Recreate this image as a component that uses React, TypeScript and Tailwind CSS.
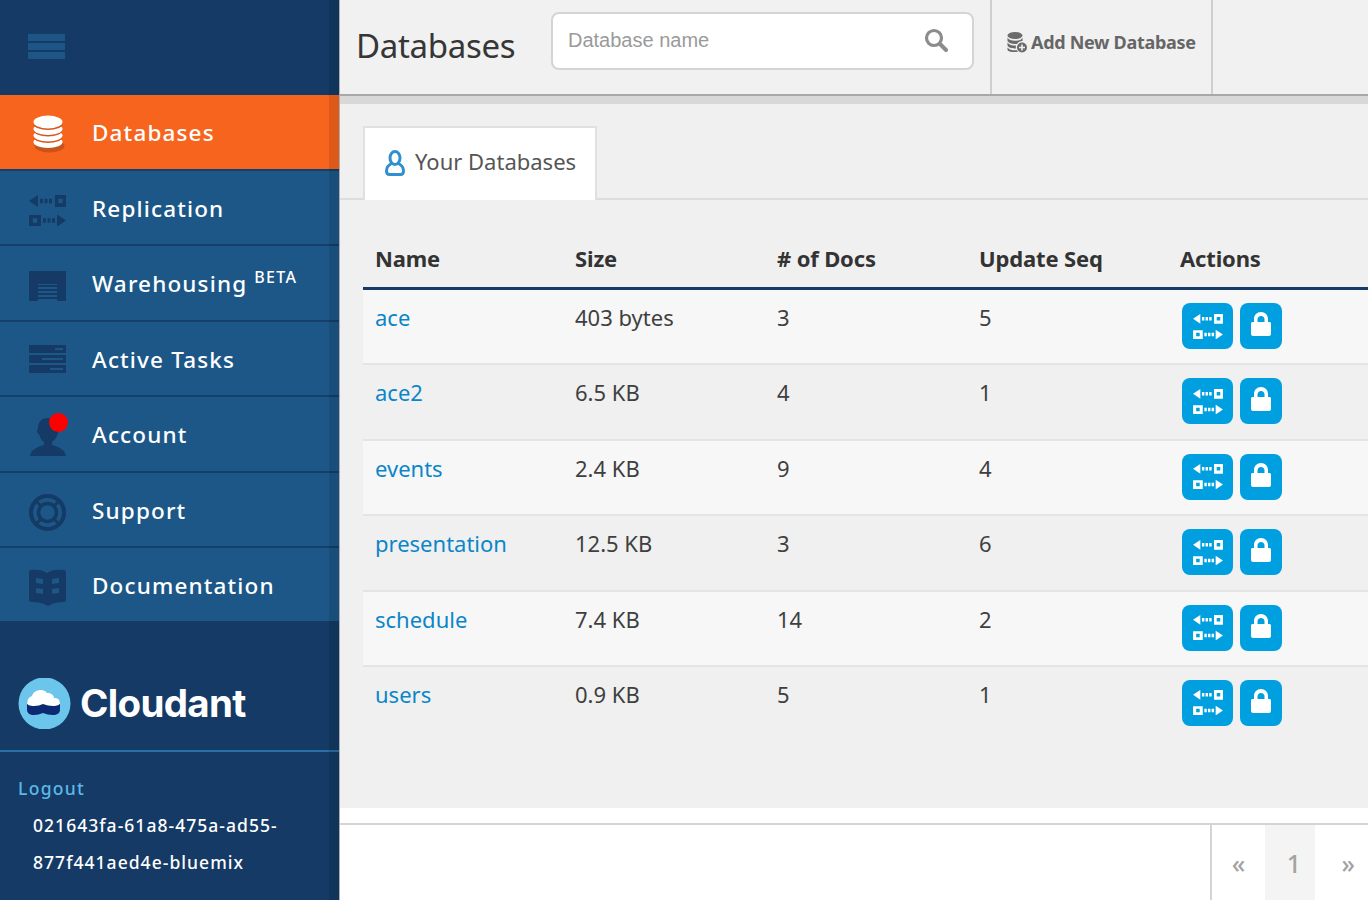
import React from 'react'

const sansFont = "font-['Noto_Sans','Open_Sans',sans-serif]"

// icons, all drawn with currentColor
const ReplicationIcon = ({ className }: { className?: string }) => (
  <svg className={className} viewBox="0 0 37 31" fill="currentColor">
    <path d="M0 6L9 0V12Z" />
    <path d="M11 3.800h3v4.400h-3zM15.500 3.800h3v4.400h-3zM20 3.800h3v4.400h-3z" />
    <path fillRule="evenodd" d="M26 0h11v12H26zM29.300 3.800v4.400h4.400V3.800z" />
    <path fillRule="evenodd" d="M0 20h12v11H0zM3.800 23.300v4.400h4.400v-4.400z" />
    <path d="M14 23.300h3v4.400h-3zM18.500 23.300h3v4.400h-3zM23 23.300h3v4.400h-3z" />
    <path d="M28 19.500L37 25.500L28 31.500Z" />
  </svg>
)

const DatabaseIcon = ({ className }: { className?: string }) => (
  <svg className={className} viewBox="0 0 32 38">
    <ellipse cx="16.500" cy="31" rx="15" ry="6.500" fill="#c9531b" />
    {[27, 20.500, 14].map((cy) => (
      <g key={cy}>
        <ellipse cx="15" cy={cy} rx="14.500" ry="6" fill="#fff" />
        <ellipse cx="15" cy={cy - 5} rx="14.500" ry="6" fill="#d9541b" />
      </g>
    ))}
    <ellipse cx="15" cy="7" rx="14.500" ry="6.500" fill="#fff" />
  </svg>
)

const WarehouseIcon = ({ className }: { className?: string }) => (
  <svg className={className} viewBox="0 0 37 30" fill="currentColor">
    <path fillRule="evenodd" d="M0 0h37v30H0zM9 13v17h19V13z" />
    <path d="M9 14h19v2H9zM9 18h19v2H9zM9 22h19v2H9zM9 26h19v2H9z" />
  </svg>
)

const TasksIcon = ({ className }: { className?: string }) => (
  <svg className={className} viewBox="0 0 37 30" fill="currentColor">
    <path fillRule="evenodd" d="M0 1h37v8H0zM26 4v2h8V4z" />
    <path fillRule="evenodd" d="M0 11h37v8H0zM13 14v2h21v-2z" />
    <path fillRule="evenodd" d="M0 21h37v8H0zM21 24v2h13v-2z" />
  </svg>
)

const AccountIcon = ({ className }: { className?: string }) => (
  <svg className={className} viewBox="0 0 36 38" fill="currentColor">
    <path d="M18 0c-6 0-10 4-10 10 0 1-1 2-1 3s1 3 2 3c1 4 3 7 5 8v3C8 29 1 31 0 38h36c-1-7-8-9-14-11v-3c3-2 5-5 6-9 1-5 0-15-10-15z" />
  </svg>
)

const SupportIcon = ({ className }: { className?: string }) => (
  <svg className={className} viewBox="0 0 37 37" fill="none" stroke="currentColor">
    <circle cx="18.500" cy="18.500" r="16.500" strokeWidth="4" />
    <circle cx="18.500" cy="18.500" r="9" strokeWidth="3.500" />
    <path strokeWidth="3" d="M6 6l7 7M31 6l-7 7M6 31l7-7M31 31l-7-7" />
  </svg>
)

const BookIcon = ({ className }: { className?: string }) => (
  <svg className={className} viewBox="0 0 37 37" fill="currentColor">
    <path
      fillRule="evenodd"
      d="M2 1c6-1 12 0 16 3 4-3 10-4 17-3 1 0 2 1 2 2v28c0 1-1 2-2 2-6 0-11 1-14 3l-2 1-2-1c-3-2-8-3-15-3-1 0-2-1-2-2V3c0-1 1-2 2-2zM7 9v5l7 1v-5zM30 9l-7 1v5l7-1zM7 19v5l7 1v-5zM30 19l-7 1v5l7-1z"
    />
  </svg>
)

const LockIcon = ({ className }: { className?: string }) => (
  <svg className={className} viewBox="0 0 20 24" fill="currentColor">
    <path fillRule="evenodd" d="M10 0c4 0 7 3 7 7v3h1.500c.8 0 1.500.7 1.500 1.500V22c0 1-1 2-2 2H2c-1 0-2-1-2-2V11.500C0 10.700.7 10 1.500 10H3V7c0-4 3-7 7-7zm0 4C8 4 6.500 5.500 6.500 7.500V10h7V7.500C13.500 5.500 12 4 10 4z" />
  </svg>
)

const SearchGlyph = ({ className }: { className?: string }) => (
  <svg className={className} viewBox="0 0 24 24" fill="none" stroke="#8c8c8c" strokeLinecap="round">
    <circle cx="10" cy="10" r="7.500" strokeWidth="3.200" />
    <path strokeWidth="4" d="M16 16l6 6" />
  </svg>
)

const AddDatabaseIcon = ({ className }: { className?: string }) => (
  <svg className={className} viewBox="0 0 20 21" fill="#6b6b6b">
    <ellipse cx="8" cy="3.500" rx="7.500" ry="3.500" />
    <path d="M.5 5.500C1.500 8 4.500 8.700 8 8.700s6.500-.7 7.500-3.200V9C13 9 11 10 10 12H8C4.500 12 1.500 11 .5 9zM.5 10.500C2 13 5 13.500 9 13.500c-.3 1-.3 2 0 3-4 0-7.500-.7-8.500-3zM.5 15.500C2 18 6 18.500 10 18.300l1 1.500C6 20.500 1.500 20 .5 18z" />
    <circle cx="15" cy="15.500" r="5" />
    <path fill="#f1f1f1" d="M14.200 12.500h1.600v2.200H18v1.600h-2.200v2.200h-1.600v-2.200H12v-1.600h2.200z" />
  </svg>
)

const CloudantMark = () => (
  <svg className="w-[53px] h-[51px] shrink-0" viewBox="0 0 53 51">
    <circle cx="26.500" cy="25.500" r="26" fill="#6cc5ea" />
    <path fill="#0c2a72" d="M9 23v9c0 3 3 5 7 5 3 0 6-1 9-2 3 1 6 2 10 2s7-2 7-5v-9z" />
    <path fill="#fff" d="M9 25c0-3 2-6 5-7 1-4 5-6 9-6 2 0 5 1 6 3 4 0 7 2 7 5 4 0 6 2 6 5 0 2-3 3-7 3-3 0-7-1-10-2-3 1-5 2-9 2-4 0-7-1-7-3z" />
  </svg>
)

const navItems = [
  { label: 'Replication', icon: ReplicationIcon, iconClass: 'w-[37px] h-[31px]' },
  { label: 'Warehousing', icon: WarehouseIcon, iconClass: 'w-[37px] h-[30px]', beta: true },
  { label: 'Active Tasks', icon: TasksIcon, iconClass: 'w-[37px] h-[30px] -mt-[5px]' },
  { label: 'Account', icon: AccountIcon, iconClass: 'w-[36px] h-[38px]', badge: true },
  { label: 'Support', icon: SupportIcon, iconClass: 'w-[37px] h-[37px]' },
  { label: 'Documentation', icon: BookIcon, iconClass: 'w-[37px] h-[37px]' },
]

const databases = [
  { name: 'ace', size: '403 bytes', docs: '3', seq: '5' },
  { name: 'ace2', size: '6.5 KB', docs: '4', seq: '1' },
  { name: 'events', size: '2.4 KB', docs: '9', seq: '4' },
  { name: 'presentation', size: '12.5 KB', docs: '3', seq: '6' },
  { name: 'schedule', size: '7.4 KB', docs: '14', seq: '2' },
  { name: 'users', size: '0.9 KB', docs: '5', seq: '1' },
]

const Sidebar = () => (
  <aside className="relative w-[340px] h-[900px] shrink-0 bg-[#143a65] border-r border-[#adadad] flex flex-col overflow-hidden">
    <div className="h-[92px] shrink-0 flex flex-col justify-center gap-[2px] pl-[28px]">
      <div className="w-[37px] h-[7px] bg-[#1d5587]" />
      <div className="w-[37px] h-[7px] bg-[#1d5587]" />
      <div className="w-[37px] h-[7px] bg-[#1d5587]" />
    </div>
    <div className="h-[3px] shrink-0" />

    <div className="h-[74px] shrink-0 bg-[#f7641e] flex items-center pl-[33px]">
      <DatabaseIcon className="w-[32px] h-[38px] mt-[3px]" />
      <span className="ml-[27px] pt-[2px] text-white font-medium text-[22.500px] tracking-[1.150px] leading-none">Databases</span>
    </div>

    {navItems.map((item) => {
      const Icon = item.icon
      return (
        <div
          key={item.label}
          className="h-[75.400px] shrink-0 bg-[#1c5788] border-t-2 border-[#153f6b] flex items-center pl-[29px]"
        >
          <div className="relative w-[37px] pt-[6px] flex justify-center text-[#143a65]">
            <Icon className={item.iconClass} />
            {item.badge && <span className="absolute top-[1px] left-[20px] w-[19px] h-[19px] rounded-full bg-[#ff0000]" />}
          </div>
          <span className="ml-[26px] pt-[3px] text-white font-medium text-[22.500px] tracking-[1.150px] leading-none">{item.label}</span>
          {item.beta && <span className="ml-[7px] -mt-[12px] text-white font-medium text-[16px] tracking-[1.300px] leading-none">BETA</span>}
        </div>
      )
    })}

    <div className="h-[131px] shrink-0 flex items-center pl-[18px] border-b-2 border-[#2a70a8] pt-[35px]">
      <CloudantMark />
      <span className="ml-[9px] font-['Inter',sans-serif] font-bold text-white text-[38.500px] leading-none tracking-[-0.700px]">Cloudant</span>
    </div>

    <div className="pl-[18px] pt-[24px]">
      <div className="text-[#5cb8e6] font-medium text-[17.500px] tracking-[1.300px] leading-[24px]">Logout</div>
      <div className="pl-[15px] pt-[7px] text-white font-medium text-[17.500px] tracking-[1.040px] leading-[37px]">
        <div>021643fa-61a8-475a-ad55-</div>
        <div>877f441aed4e-bluemix</div>
      </div>
    </div>

    {/* darker strip along the inner edge */}
    <div className="absolute inset-y-0 right-0 w-[10px] bg-black/10" />
  </aside>
)

const TopBar = () => (
  <header className="h-[96px] shrink-0 bg-[#f1f1f1] border-b-2 border-[#a8a8a8] flex">
    <h1 className="w-[211px] shrink-0 pl-[16px] pt-[24px] text-[33px] leading-[44px] text-[#363636] tracking-[-0.300px]">Databases</h1>
    <div className="w-[439px] shrink-0 pt-[12px]">
      <div className="w-[423px] h-[58px] bg-white border-2 border-[#d4d4d4] rounded-[8px] flex items-center justify-between pl-[15px] pr-[24px]">
        <span className="font-['Liberation_Sans',sans-serif] text-[20px] text-[#9a9a9a] -mt-[3px]">Database name</span>
        <SearchGlyph className="w-[24px] h-[24px] -mt-[3px]" />
      </div>
    </div>
    <div className="w-[223px] shrink-0 border-l-2 border-r-2 border-[#cfcfcf] flex items-center pl-[15px] pb-[10px]">
      <AddDatabaseIcon className="w-[20px] h-[21px]" />
      <span className="ml-[4px] text-[#666666] text-[18px] font-bold tracking-[-0.300px] leading-none">Add New Database</span>
    </div>
  </header>
)

const Table = () => (
  <div className="pl-[23px]">
    <div className="grid grid-cols-[200px_202px_202px_201px_1fr] h-[52px] border-b-[3px] border-[#143a65] pt-[4px]">
      {['Name', 'Size', '# of Docs', 'Update Seq', 'Actions'].map((h) => (
        <div key={h} className="pl-[12px] text-[22px] font-bold text-[#333333] tracking-[-0.150px]">{h}</div>
      ))}
    </div>
    {databases.map((db, i) => (
      <div
        key={db.name}
        className={`grid grid-cols-[200px_202px_202px_201px_1fr] h-[75.400px] text-[22px] text-[#3f3f3f] ${i % 2 === 0 ? 'bg-[#f7f7f7]' : 'bg-[#f0f0f0]'} ${i === 5 ? '' : 'border-b-2 border-[#e4e4e4]'}`}
      >
        <div className="pl-[12px] pt-[10px] text-[#0a86c8] leading-[35px]">{db.name}</div>
        <div className="pl-[12px] pt-[10px] leading-[35px]">{db.size}</div>
        <div className="pl-[12px] pt-[10px] leading-[35px]">{db.docs}</div>
        <div className="pl-[12px] pt-[10px] leading-[35px]">{db.seq}</div>
        <div className="pl-[14px] pt-[13px] flex gap-[7px] items-start">
          <button className="w-[51px] h-[46px] rounded-[8px] bg-[#00a0e0] flex items-center justify-center text-white">
            <ReplicationIcon className="w-[30px] h-[25px]" />
          </button>
          <button className="w-[42px] h-[46px] rounded-[8px] bg-[#00a0e0] flex items-center justify-center text-white pb-[4px]">
            <LockIcon className="w-[20px] h-[24px]" />
          </button>
        </div>
      </div>
    ))}
  </div>
)

const Pagination = () => (
  <div className="h-[92px] shrink-0 bg-white pt-[15px] overflow-hidden">
    <div className="h-[77px] border-t-2 border-[#d4d4d4] flex justify-end">
      <div className="w-[158px] border-l-2 border-[#d4d4d4] flex text-[#a3a3a3] text-[25px] font-medium">
        <div className="w-[54px] flex items-center justify-center pt-[2px]">«</div>
        <div className="w-[51px] bg-[#f4f4f4] flex items-center justify-center pt-[2px] pl-[7px]">1</div>
        <div className="w-[53px] flex items-center justify-start pl-[26px] pt-[2px]">»</div>
      </div>
    </div>
  </div>
)

export default function App() {
  return (
    <div className={`${sansFont} flex w-[1368px] h-[900px] overflow-hidden`}>
      <Sidebar />
      <main className="flex-1 min-w-0 flex flex-col bg-[#f0f0f0]">
        <TopBar />
        <div className="h-[8px] shrink-0 bg-[#d8d8d8]" />
        <div className="flex-1 min-h-0 pt-[22px]">
          <div className="border-b-2 border-[#dddddd] h-[74px] pl-[23px]">
            <div className="w-[234px] h-[74px] bg-white border-t-2 border-l-2 border-r-2 border-[#e0e0e0] flex items-center pl-[20px] pb-[2px]">
              <svg className="w-[20px] h-[26px]" viewBox="0 0 20 26" fill="none" stroke="#2f8fcf" strokeWidth="3">
                <ellipse cx="10" cy="8" rx="5" ry="6.500" />
                <path d="M6.500 13.500c-3 1.500-5 4-5 7.500 0 2 1 3.500 3 3.500h11c2 0 3-1.500 3-3.500 0-3.500-2-6-5-7.500" />
              </svg>
              <span className="ml-[10px] -mt-[4px] text-[22px] text-[#555555]">Your Databases</span>
            </div>
          </div>
          <div className="pt-[38px]">
            <Table />
          </div>
        </div>
        <Pagination />
      </main>
    </div>
  )
}
